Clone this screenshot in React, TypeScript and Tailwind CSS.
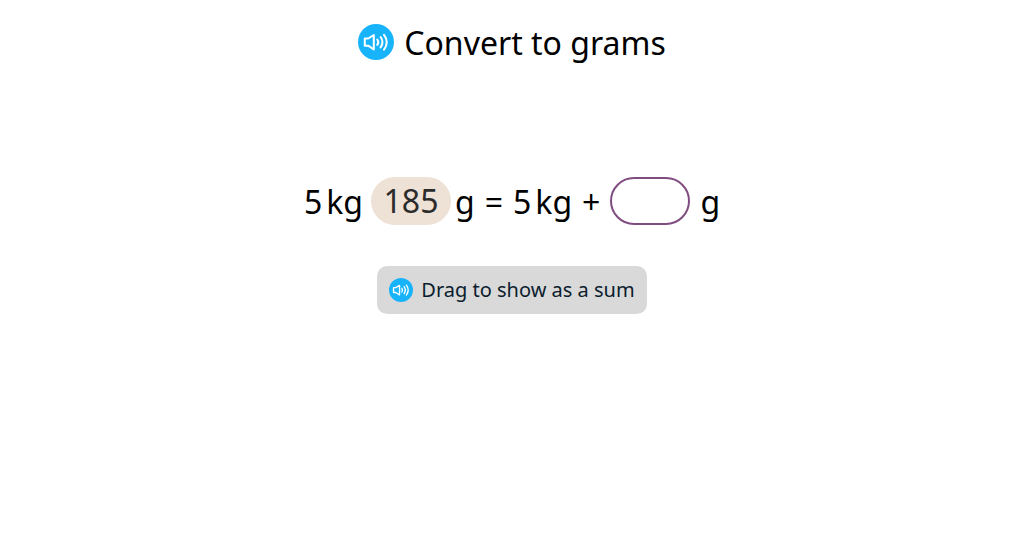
function Speaker({ className }: { className: string }) {
  return (
    <svg viewBox="0 0 36 36" className={className} fill="none" aria-hidden="true">
      <circle cx="18" cy="18" r="18" fill="#18b4fb" />
      <g stroke="#fff" strokeWidth="2" strokeLinecap="round" strokeLinejoin="round">
        <path d="M6.800 14.500v7.200h3.400L15.800 25.500V11L10.200 14.500z" />
        <path d="M19.300 15.500q2 2.700 0 5.400" />
        <path d="M22.600 13q3.800 5.200 0 10.400" />
        <path d="M26 10.800q5.600 7.400 0 14.800" />
      </g>
    </svg>
  );
}

export default function App() {
  return (
    <main className="flex flex-col items-center bg-white pt-6 font-['Noto_Sans',sans-serif] text-black">
      <header className="flex h-9 items-start gap-[10px]">
        <button type="button" aria-label="Read the title aloud" className="rounded-full">
          <Speaker className="size-9" />
        </button>
        <h1 className="text-[32px] leading-[38px]">Convert to grams</h1>
      </header>

      <section className="mt-[117px] flex h-12 items-start gap-[10px] text-[32px] leading-[50px]">
        <span className="flex items-start gap-1">
          <span>5</span>
          <span>kg</span>
          <button type="button" className="ml-1 h-12 w-20 cursor-grab rounded-full bg-[#eee1d6] leading-[46px] text-[#2b2b2b]">
            185
          </button>
          <span>g</span>
        </span>
        <span>=</span>
        <span className="flex gap-1">
          <span>5</span>
          <span>kg</span>
        </span>
        <span>+</span>
        <button type="button" aria-label="Drop the number here" className="h-12 w-20 rounded-full border-2 border-[#7f4d80]" />
        <span>g</span>
      </section>

      <section className="mt-[41px] flex h-12 items-center gap-2 rounded-[10px] bg-[#d9d9d9] px-3 text-[#0b1d2e]">
        <button type="button" aria-label="Read the hint aloud" className="rounded-full">
          <Speaker className="size-6" />
        </button>
        <p className="text-xl">Drag to show as a sum</p>
      </section>
    </main>
  );
}
